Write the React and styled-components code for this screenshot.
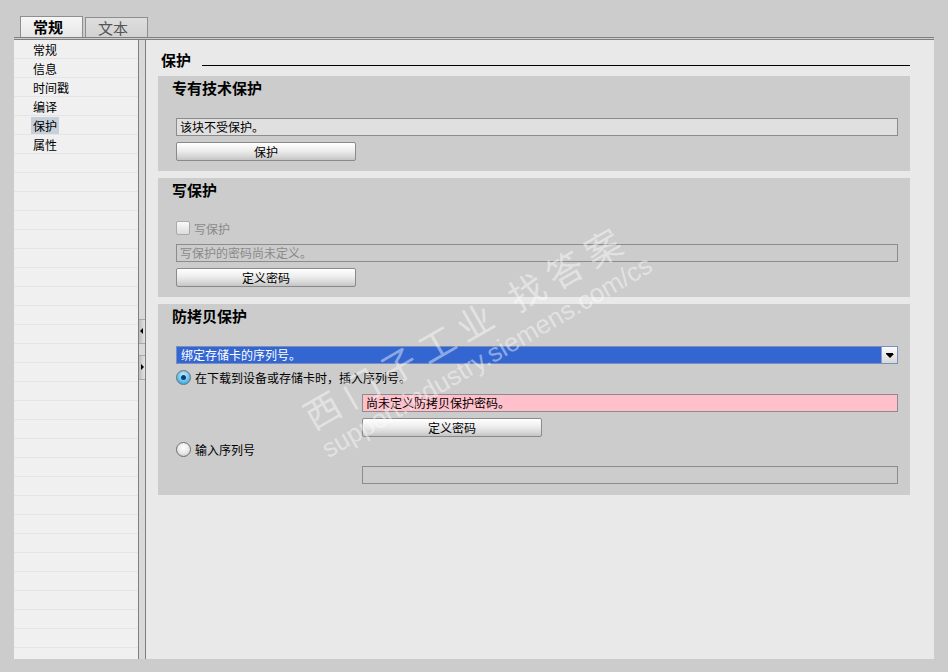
import React from 'react';
import styled, { createGlobalStyle } from 'styled-components';

const GlobalStyle = createGlobalStyle`
  html, body {
    margin: 0;
    padding: 0;
    background: #cccccc;
  }
  body {
    font-family: "Noto Sans CJK SC", "Liberation Sans", sans-serif;
    font-size: 12px;
    color: #000;
  }
`;

// Page shell
const Page = styled.div`
  position: relative;
  width: 948px;
  height: 672px;
  box-sizing: border-box;
  padding: 16px 14px 13px 14px;
  display: flex;
  flex-direction: column;
  overflow: hidden;
`;

const TabBar = styled.div`
  display: flex;
  gap: 2px;
  padding-left: 6px;
  height: 21px;
  align-items: flex-end;
`;

const Tab = styled.div`
  box-sizing: border-box;
  width: 63px;
  height: ${p => (p.$active ? '21px' : '20px')};
  padding-left: 12px;
  border: 1px solid #8e8e8e;
  border-bottom: none;
  background: ${p => (p.$active
    ? 'linear-gradient(#f6f6f6, #e6e6e6)'
    : 'linear-gradient(#dedede, #d2d2d2)')};
  color: ${p => (p.$active ? '#000' : '#555')};
  font-size: 15px;
  font-weight: ${p => (p.$active ? 700 : 400)};
  line-height: ${p => (p.$active ? '20px' : '19px')};
`;

const Frame = styled.div`
  flex: 1;
  width: 920px;
  border-top: 3px double #7f7f7f;
  display: grid;
  grid-template-columns: 124px 8px 1fr;
  min-height: 0;
`;

// Left navigation
const Nav = styled.div`
  background: #f0f0f0;
  display: flex;
  flex-direction: column;
  overflow: hidden;
`;

const NavRow = styled.div`
  box-sizing: border-box;
  height: 19px;
  flex-shrink: 0;
  border-bottom: 1px solid #e5e5e5;
  padding-left: 17px;
  display: flex;
  align-items: center;
`;

const NavLabel = styled.span`
  padding: 1px 2px;
  line-height: 15px;
  background: ${p => (p.$selected ? '#c5d0db' : 'transparent')};
`;

const Splitter = styled.div`
  border-left: 1px solid #7f7f7f;
  border-right: 1px solid #7f7f7f;
  background: #d9d9d9;
  display: flex;
  flex-direction: column;
  justify-content: center;
  gap: 11px;
  padding-bottom: 1px;
`;

const SplitButton = styled.div`
  height: 23px;
  border-top: 1px solid #a8a8a8;
  border-bottom: 1px solid #a8a8a8;
  background: linear-gradient(90deg, #bdbdbd, #e4e4e4);
  display: flex;
  align-items: center;
  justify-content: ${p => (p.$dir === 'left' ? 'flex-start' : 'flex-end')};
  padding: 0 1px;
`;

const Arrow = styled.div`
  width: 0;
  height: 0;
  border-top: 3px solid transparent;
  border-bottom: 3px solid transparent;
  ${p => (p.$dir === 'left'
    ? 'border-right: 3px solid #000;'
    : 'border-left: 3px solid #000;')}
`;

// Right content
const Content = styled.div`
  background: #e9e9e9;
  padding: 12px 24px 0 12px;
  display: flex;
  flex-direction: column;
  gap: 7px;
`;

const PageHeading = styled.div`
  display: flex;
  align-items: flex-end;
  gap: 11px;
  height: 16px;
  margin-left: 3px;
  margin-bottom: 1px;
  font-size: 15px;
  font-weight: 700;
  line-height: 16px;
`;

const HeadingRule = styled.div`
  flex: 1;
  border-bottom: 1px solid #000;
  margin-bottom: 2px;
`;

const Section = styled.div`
  background: #cccccc;
  padding: 4px 12px ${p => p.$pb || 10}px 18px;
  display: flex;
  flex-direction: column;
`;

const SectionTitle = styled.div`
  margin-left: -4px;
  height: 16px;
  font-size: 15px;
  font-weight: 700;
  line-height: 16px;
  margin-bottom: ${p => p.$gap || 22}px;
`;

const Field = styled.div`
  box-sizing: border-box;
  height: 18px;
  margin-left: ${p => p.$indent || 0}px;
  border: 1px solid #8c8c8c;
  background: ${p => p.$bg || '#e0e0e0'};
  color: ${p => (p.$disabled ? '#8a8a8a' : '#000')};
  padding-left: 3px;
  line-height: 16px;
  white-space: nowrap;
  margin-bottom: ${p => p.$mb || 0}px;
`;

const Button = styled.div`
  box-sizing: border-box;
  width: 180px;
  height: 19px;
  margin-left: ${p => p.$indent || 0}px;
  border: 1px solid #8a8a8a;
  border-radius: 2px;
  background: linear-gradient(#ffffff 0%, #ededed 45%, #d6d6d6 80%, #c4c4c4 100%);
  text-align: center;
  line-height: 17px;
  margin-bottom: ${p => p.$mb || 0}px;
`;

const CheckRow = styled.div`
  display: flex;
  align-items: center;
  gap: 4px;
  height: 16px;
  color: ${p => (p.$disabled ? '#8a8a8a' : '#000')};
  margin-bottom: ${p => p.$mb || 0}px;
`;

const CheckBox = styled.div`
  box-sizing: border-box;
  width: 14px;
  height: 14px;
  border: 1px solid #a9a9a9;
  border-radius: 2px;
  background: linear-gradient(#fafafa, #dcdcdc);
`;

const Radio = styled.div`
  box-sizing: border-box;
  width: 15px;
  height: 15px;
  border-radius: 50%;
  border: 1px solid #707070;
  display: flex;
  align-items: center;
  justify-content: center;
  background: ${p => (p.$checked
    ? 'radial-gradient(circle at 50% 35%, #d4f2ff 0%, #5fc3ee 55%, #2a8fcc 100%)'
    : 'radial-gradient(circle at 50% 35%, #ffffff 0%, #e8e8e8 55%, #b8b8b8 100%)')};
`;

const RadioDot = styled.div`
  width: 5px;
  height: 5px;
  border-radius: 50%;
  background: #0b3f7a;
`;

const Select = styled.div`
  box-sizing: border-box;
  height: 18px;
  border: 1px solid #7b8fbf;
  background: #3366d0;
  color: #fff;
  display: flex;
  align-items: stretch;
  margin-bottom: 5px;
`;

const SelectText = styled.div`
  flex: 1;
  padding-left: 4px;
  line-height: 16px;
`;

const SelectButton = styled.div`
  width: 15px;
  border-left: 1px solid #8a9cc8;
  background: linear-gradient(#fbfbfb, #d8d8d8);
  display: flex;
  flex-direction: column;
  align-items: center;
  justify-content: center;
`;

const DownBar = styled.div`
  width: 7px;
  height: 1px;
  background: #000;
`;

const DownTri = styled.div`
  width: 0;
  height: 0;
  border-left: 4px solid transparent;
  border-right: 4px solid transparent;
  border-top: 4px solid #000;
`;

// Watermark overlay
const Watermark = styled.div`
  position: absolute;
  left: ${p => p.$x}px;
  top: ${p => p.$y}px;
  transform: translate(-50%, -50%) rotate(-30deg);
  white-space: nowrap;
  color: rgba(255, 255, 255, 0.45);
  font-family: ${p => (p.$latin ? '"Liberation Sans", sans-serif' : '"Noto Sans CJK SC", sans-serif')};
  font-size: ${p => p.$size}px;
  letter-spacing: ${p => p.$spacing || 0}px;
  pointer-events: none;
`;

const navItems = ['常规', '信息', '时间戳', '编译', '保护', '属性'];

const App = () => {
  const rows = [];
  for (let i = 0; i < 33; i++) rows.push(navItems[i] || '');

  return (
    <Page>
      <GlobalStyle />
      <TabBar>
        <Tab $active>常规</Tab>
        <Tab>文本</Tab>
      </TabBar>
      <Frame>
        <Nav>
          {rows.map((label, i) => (
            <NavRow key={i}>
              {label && <NavLabel $selected={label === '保护'}>{label}</NavLabel>}
            </NavRow>
          ))}
        </Nav>
        <Splitter>
          <SplitButton $dir="left"><Arrow $dir="left" /></SplitButton>
          <SplitButton $dir="right"><Arrow $dir="right" /></SplitButton>
        </Splitter>
        <Content>
          <PageHeading>
            保护
            <HeadingRule />
          </PageHeading>

          {/* 专有技术保护 */}
          <Section>
            <SectionTitle>专有技术保护</SectionTitle>
            <Field $mb={6}>该块不受保护。</Field>
            <Button>保护</Button>
          </Section>

          {/* 写保护 */}
          <Section>
            <SectionTitle $gap={22}>写保护</SectionTitle>
            <CheckRow $disabled $mb={8}>
              <CheckBox />
              写保护
            </CheckRow>
            <Field $disabled $bg="transparent" $mb={6}>写保护的密码尚未定义。</Field>
            <Button>定义密码</Button>
          </Section>

          {/* 防拷贝保护 */}
          <Section $pb={11}>
            <SectionTitle $gap={22}>防拷贝保护</SectionTitle>
            <Select>
              <SelectText>绑定存储卡的序列号。</SelectText>
              <SelectButton>
                <DownBar />
                <DownTri />
              </SelectButton>
            </Select>
            <CheckRow $mb={9}>
              <Radio $checked><RadioDot /></Radio>
              在下载到设备或存储卡时，插入序列号。
            </CheckRow>
            <Field $indent={186} $bg="#ffc0cb" $mb={6}>尚未定义防拷贝保护密码。</Field>
            <Button $indent={186} $mb={4}>定义密码</Button>
            <CheckRow $mb={9}>
              <Radio />
              输入序列号
            </CheckRow>
            <Field $indent={186} $bg="transparent" />
          </Section>
        </Content>
      </Frame>
      <Watermark $x={465} $y={325} $size={36} $spacing={8}>西门子工业 找答案</Watermark>
      <Watermark $x={487} $y={357} $size={26} $latin>support.industry.siemens.com/cs</Watermark>
    </Page>
  );
};

export default App;
